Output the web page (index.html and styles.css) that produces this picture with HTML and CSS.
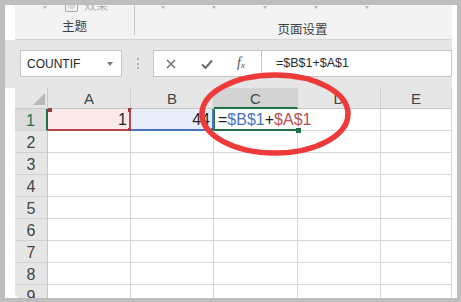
FILE: index.html
```html
<!doctype html>
<html lang="zh-CN">
<head>
    <meta charset="UTF-8">
    <title>COUNTIF</title>
    <link rel="stylesheet" href="styles.css">
</head>
<body>
<div class="window">
    <div class="ribbon">
        <div class="group group-theme">
            <div class="group-top">
                <span class="tick tick-first"></span>
                <span class="effect"><span class="effect-icon"></span>效果</span>
            </div>
            <div class="group-label">主题</div>
        </div>
        <div class="group group-page">
            <div class="group-top ticks">
                <span class="tick"></span>
                <span class="tick"></span>
                <span class="tick"></span>
                <span class="tick"></span>
                <span class="tick"></span>
            </div>
            <div class="group-label">页面设置</div>
        </div>
    </div>

    <div class="formula-bar">
        <div class="name-box">
            <span>COUNTIF</span>
            <span class="caret"></span>
        </div>
        <div class="grip"></div>
        <div class="fx-buttons">
            <svg class="icon-cancel" width="10" height="10" viewBox="0 0 10 10">
                <path d="M1 1 L9 9 M9 1 L1 9" stroke="#6b6b6b" stroke-width="1.4" fill="none"/>
            </svg>
            <svg class="icon-enter" width="12" height="10" viewBox="0 0 12 10">
                <path d="M1 5.5 L4.5 9 L11 1.5" stroke="#6b6b6b" stroke-width="2" fill="none"/>
            </svg>
            <span class="fx">f<sub>x</sub></span>
        </div>
        <div class="formula-input">=$B$1+$A$1</div>
    </div>

    <div class="sheet">
        <div class="grid">
            <div class="corner"><span class="corner-mark"></span></div>
            <div class="col-head">A</div>
            <div class="col-head">B</div>
            <div class="col-head col-active">C</div>
            <div class="col-head">D</div>
            <div class="col-head">E</div>

            <div class="row-head row-active">1</div>
            <div class="cell ref-a">1<i class="handle h-tl"></i><i class="handle h-tr"></i><i class="handle h-br"></i></div>
            <div class="cell ref-b">44<i class="handle h-br"></i></div>
            <div class="cell active"><span>=</span><span class="blue">$B$1</span><span>+</span><span class="red">$A$1</span><i class="handle h-br"></i></div>
            <div class="cell"></div>
            <div class="cell"></div>

            <div class="row-head">2</div>
            <div class="cell"></div><div class="cell"></div><div class="cell"></div><div class="cell"></div><div class="cell"></div>
            <div class="row-head">3</div>
            <div class="cell"></div><div class="cell"></div><div class="cell"></div><div class="cell"></div><div class="cell"></div>
            <div class="row-head">4</div>
            <div class="cell"></div><div class="cell"></div><div class="cell"></div><div class="cell"></div><div class="cell"></div>
            <div class="row-head">5</div>
            <div class="cell"></div><div class="cell"></div><div class="cell"></div><div class="cell"></div><div class="cell"></div>
            <div class="row-head">6</div>
            <div class="cell"></div><div class="cell"></div><div class="cell"></div><div class="cell"></div><div class="cell"></div>
            <div class="row-head">7</div>
            <div class="cell"></div><div class="cell"></div><div class="cell"></div><div class="cell"></div><div class="cell"></div>
            <div class="row-head">8</div>
            <div class="cell"></div><div class="cell"></div><div class="cell"></div><div class="cell"></div><div class="cell"></div>
            <div class="row-head">9</div>
            <div class="cell"></div><div class="cell"></div><div class="cell"></div><div class="cell"></div><div class="cell"></div>
        </div>
    </div>
</div>

<svg class="mark" width="461" height="302" viewBox="0 0 461 302">
    <ellipse cx="275" cy="114" rx="73" ry="39" fill="none" stroke="#ef3a3a" stroke-width="5.5"/>
</svg>
</body>
</html>
```

FILE: styles.css
```css
body
{
    margin: 0;
    padding: 0;
    position: relative;
    width: 461px;
    height: 302px;
    overflow: hidden;
    font-family: "Liberation Sans", "Noto Sans CJK SC", sans-serif;
}
.window
{
    box-sizing: border-box;
    height: 302px;
    border-style: solid;
    border-color: #bebebe;
    border-width: 5px 4px 4px 5px;
    background-color: #ffffff;
    display: flex;
    flex-direction: column;
}
.ribbon
{
    height: 34px;
    margin: 0 5px 0 10px;
    background-color: #f3f3f3;
    border-bottom: 1px solid #d6d6d6;
    display: flex;
    overflow: hidden;
    flex-shrink: 0;
}
.group
{
    display: flex;
    flex-direction: column;
}
.group-theme
{
    width: 119px;
    height: 30px;
    border-right: 1px solid #c8c8c8;
}
.group-page
{
    flex: 1;
}
.group-top
{
    height: 17px;
    display: flex;
    align-items: flex-start;
}
.tick
{
    width: 0;
    height: 0;
    margin-top: 1px;
    border-top: 3px solid #b5b5b5;
    border-left: 2.5px solid transparent;
    border-right: 2.5px solid transparent;
}
.tick-first
{
    margin-left: 28px;
}
.ticks
{
    padding-left: 26px;
    gap: 47px;
}
.effect
{
    display: flex;
    align-items: flex-start;
    margin-left: 18px;
    margin-top: -6px;
    font-size: 12px;
    line-height: 14px;
    color: #b3b3b3;
}
.effect-icon
{
    box-sizing: border-box;
    width: 13px;
    height: 13px;
    margin-right: 6px;
    border: 1px solid #a8a8a8;
    border-radius: 2px;
    background: radial-gradient(circle at 50% 50%, #d8d8d8 0 3.5px, transparent 4px);
}
.group-label
{
    font-size: 12.5px;
    line-height: 16px;
    color: #3f3f3f;
    text-align: center;
}
.group-page .group-label
{
    padding-left: 18px;
}
.formula-bar
{
    height: 48px;
    box-sizing: border-box;
    margin-right: 5px;
    padding: 10px 0 11px 15px;
    background-color: #e6e6e6;
    display: flex;
    flex-shrink: 0;
}
.name-box
{
    box-sizing: border-box;
    width: 102px;
    border: 1px solid #c6c6c6;
    background-color: #ffffff;
    display: flex;
    align-items: center;
    justify-content: space-between;
    padding: 0 8px 0 6px;
    font-size: 12px;
    color: #262626;
}
.caret
{
    width: 0;
    height: 0;
    border-top: 4px solid #7a7a7a;
    border-left: 3.5px solid transparent;
    border-right: 3.5px solid transparent;
}
.grip
{
    width: 0;
    height: 11px;
    align-self: center;
    margin: 0 14px 0 15px;
    border-left: 2px dotted #b3b3b3;
}
.fx-buttons
{
    box-sizing: border-box;
    width: 109px;
    border: 1px solid #c6c6c6;
    background-color: #ffffff;
    display: flex;
    align-items: center;
    padding-left: 12px;
}
.icon-cancel
{
    margin-right: 25px;
}
.icon-enter
{
    margin-right: 24px;
}
.fx
{
    font-family: "Liberation Serif", serif;
    font-style: italic;
    font-size: 14px;
    color: #555555;
    line-height: 14px;
}
.fx sub
{
    font-size: 9px;
    vertical-align: -1px;
}
.formula-input
{
    flex: 1;
    box-sizing: border-box;
    border: 1px solid #c6c6c6;
    border-left: none;
    background-color: #ffffff;
    padding-left: 14px;
    font-size: 12.5px;
    line-height: 25px;
    color: #2b2b2b;
}
.sheet
{
    flex: 1;
    margin: 0 5px 0 10px;
    overflow: hidden;
    border-bottom-left-radius: 5px;
}
.grid
{
    display: grid;
    grid-template-columns: 33px 83px 83px 84px 83px 71px;
    grid-template-rows: 21px;
    grid-auto-rows: 22px;
}
.grid > div
{
    box-sizing: border-box;
}
.corner
{
    background-color: #e6e6e6;
    border-right: 1px solid #c9c9c9;
    border-bottom: 1px solid #c9c9c9;
    display: flex;
    justify-content: flex-end;
    align-items: flex-end;
    padding: 0 2px 3px 0;
}
.corner-mark
{
    width: 0;
    height: 0;
    border-bottom: 12px solid #b9b9b9;
    border-left: 12px solid transparent;
}
.col-head
{
    background-color: #e6e6e6;
    border-right: 1px solid #cfcfcf;
    border-bottom: 1px solid #c9c9c9;
    text-align: center;
    font-size: 15px;
    line-height: 21px;
    color: #444444;
}
.col-active
{
    background-color: #d3d3d3;
    border-bottom: 2px solid #217346;
    color: #35513f;
}
.row-head
{
    background-color: #e6e6e6;
    border-right: 1px solid #c9c9c9;
    border-bottom: 1px solid #d2d2d2;
    text-align: center;
    font-size: 16px;
    line-height: 23px;
    color: #444444;
}
.row-active
{
    background-color: #dcdcdc;
    border-right: 2px solid #217346;
    color: #217346;
}
.cell
{
    position: relative;
    border-right: 1px solid #d6d6d6;
    border-bottom: 1px solid #d6d6d6;
    background-color: #ffffff;
    font-size: 16px;
    line-height: 22px;
    color: #1f1f1f;
    white-space: nowrap;
}
.ref-a
{
    background-color: #fbe9e9;
    border-right: 2px solid #b24a4e;
    border-bottom: 2px solid #b24a4e;
    text-align: right;
    padding-right: 2px;
}
.ref-b
{
    background-color: #e7eef9;
    border-right: 2px solid #4a73c2;
    border-bottom: 2px solid #4a73c2;
    text-align: right;
    padding-right: 2px;
}
.active
{
    z-index: 1;
    border-left: 1px solid #217346;
    border-right: none;
    border-bottom: 2px solid #217346;
    padding-left: 3px;
    background-color: transparent;
}
.blue
{
    color: #4a73c2;
}
.red
{
    color: #b9504f;
}
.handle
{
    position: absolute;
    width: 4px;
    height: 4px;
}
.ref-a .handle
{
    background-color: #a33c41;
}
.ref-b .handle
{
    background-color: #3f66b3;
}
.active .handle
{
    background-color: #217346;
    width: 5px;
    height: 5px;
}
.h-tl
{
    left: 0;
    top: -1px;
}
.h-tr
{
    right: -3px;
    top: -1px;
}
.h-br
{
    right: -3px;
    bottom: -3px;
}
.active .h-br
{
    right: -3px;
    bottom: -4px;
}
.mark
{
    position: absolute;
    left: 0;
    top: 0;
    pointer-events: none;
}
```
